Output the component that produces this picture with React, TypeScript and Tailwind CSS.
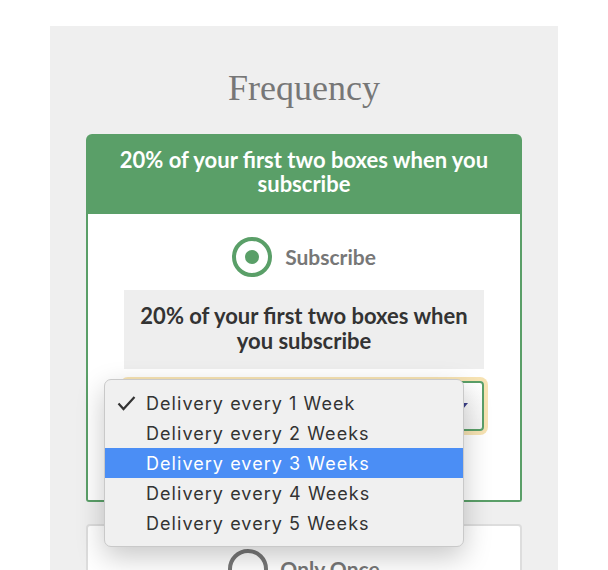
import React from 'react'

const lato = { fontFamily: 'Lato, "Open Sans", sans-serif' }

const options = [
  'Delivery every 1 Week',
  'Delivery every 2 Weeks',
  'Delivery every 3 Weeks',
  'Delivery every 4 Weeks',
  'Delivery every 5 Weeks',
]

function Radio({ checked }: { checked?: boolean }) {
  return (
    <span
      className={
        'flex h-[40px] w-[40px] items-center justify-center rounded-full border-[4px] ' +
        (checked ? 'border-[#5a9f68]' : 'border-[#777777]')
      }
    >
      {checked && <span className="h-[14px] w-[14px] rounded-full bg-[#5a9f68]" />}
    </span>
  )
}

export default function App() {
  return (
    <div className="h-[570px] w-full overflow-hidden bg-white">
      <div className="ml-[50px] mt-[26px] flex h-[544px] w-[508px] flex-col items-center bg-[#efefef] pt-[41px]" style={lato}>
        <h1
          className="h-[42px] text-[36px] leading-[42px] text-[#777777]"
          style={{ fontFamily: '"Liberation Serif", "DejaVu Serif", serif' }}
        >
          Frequency
        </h1>

        <div className="mt-[25px] w-[436px]">
          <div className="rounded-t-[6px] bg-[#5a9f68] px-[16px] pb-[18px] pt-[14px] text-center text-[22px] font-bold leading-[24px] text-white">
            20% of your first two boxes when you subscribe
          </div>
          <div className="rounded-b-[3px] border-2 border-t-0 border-[#5a9f68] bg-white px-[36px] pb-[69px] pt-[23px]">
            <div className="flex items-center justify-center gap-[13px]">
              <Radio checked />
              <span className="text-[21px] font-bold text-[#777777]">Subscribe</span>
            </div>
            <div className="mt-[13px] bg-[#eeeeee] px-[14px] pb-[16px] pt-[13px] text-center text-[22px] font-bold leading-[25px] text-[#333333]">
              20% of your first two boxes when you subscribe
            </div>
            <div className="relative mt-[12px]">
              <div className="flex h-[50px] items-center justify-end rounded-[4px] border-2 border-[#5a9f68] bg-gradient-to-b from-white to-[#f4f4f4] pr-[14px] ring-4 ring-[#f7e3b3]">
                <span className="h-0 w-0 border-l-[5px] border-r-[5px] border-t-[6px] border-l-transparent border-r-transparent border-t-[#3b3f8a]" />
              </div>
              <div
                className="absolute left-[-20px] top-[-2px] w-[360px] rounded-[7px] border border-[#c9c9c9] bg-[#f0f0f0] py-[8px] shadow-[0_10px_28px_rgba(0,0,0,0.22)]"
                style={{ fontFamily: 'Inter, "Liberation Sans", sans-serif' }}
              >
                {options.map((o, i) => (
                  <div
                    key={o}
                    className={
                      'relative flex h-[30px] items-center pl-[41px] text-[18px] tracking-[1.05px] ' +
                      (i === 2 ? 'bg-[#4b8ef5] text-white' : 'text-[#333333]')
                    }
                  >
                    {i === 0 && (
                      <svg className="absolute left-[12px] top-[8px]" width="19" height="15" viewBox="0 0 19 15">
                        <polyline points="1.5,7.5 6.5,13 17.5,1" fill="none" stroke="#333" strokeWidth="2.2" />
                      </svg>
                    )}
                    {o}
                  </div>
                ))}
              </div>
            </div>
          </div>
        </div>

        <div className="mt-[22px] h-[80px] w-[436px] rounded-[4px] border-2 border-[#dddddd] bg-white pt-[23px]">
          <div className="flex items-center justify-center gap-[12px]">
            <Radio />
            <span className="text-[21px] font-bold text-[#777777]">Only Once</span>
          </div>
        </div>
      </div>
    </div>
  )
}
